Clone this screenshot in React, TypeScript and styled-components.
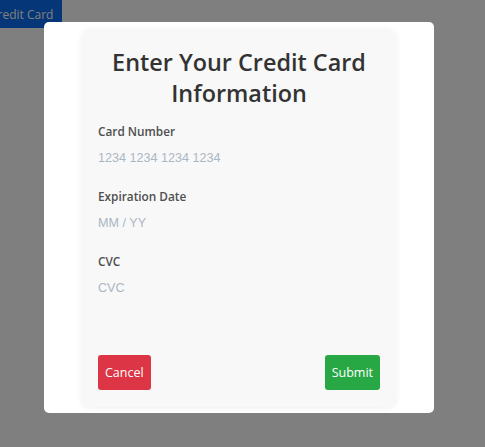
import React from "react";
import styled, { createGlobalStyle } from "styled-components";

const GlobalStyle = createGlobalStyle`
  html, body {
    margin: 0;
    padding: 0;
    background: #ffffff;
    font-family: "Open Sans", "Noto Sans", sans-serif;
  }
`;

const Page = styled.div`
  width: 100vw;
  height: 100vh;
  overflow: hidden;
`;

const TriggerButton = styled.button`
  margin-left: -19px;
  height: 28px;
  padding: 0 9px;
  border: none;
  border-radius: 0 0 4px 0;
  background: #0a6df0;
  color: #ffffff;
  font-family: "Open Sans", sans-serif;
  font-size: 12px;
`;

const Overlay = styled.div`
  position: fixed;
  inset: 0;
  background: rgba(0, 0, 0, 0.5);
  display: flex;
  justify-content: center;
  align-items: flex-start;
  padding: 22px 7px 0 0;
`;

const Modal = styled.div`
  width: 390px;
  height: 391px;
  box-sizing: border-box;
  padding: 7px 38px 6px;
  background: #ffffff;
  border-radius: 5px;
  display: flex;
`;

const Card = styled.form`
  flex: 1;
  display: flex;
  flex-direction: column;
  padding: 18px 16px 17px;
  background: #f8f8f8;
  border-radius: 9px;
  box-shadow: 0 1px 6px rgba(0, 0, 0, 0.07);
`;

const Title = styled.h2`
  margin: 0 0 13px;
  text-align: center;
  font-size: 23.4px;
  line-height: 31px;
  font-weight: 600;
  color: #333333;
`;

const Field = styled.div`
  display: flex;
  flex-direction: column;
  margin-bottom: 14px;
`;

const Label = styled.label`
  font-size: 11.8px;
  line-height: 18px;
  font-weight: 600;
  color: #4f4f4f;
  margin-bottom: 3px;
`;

const Input = styled.input`
  height: 30px;
  padding: 0;
  border: none;
  outline: none;
  background: transparent;
  font-family: "Liberation Sans", Arial, sans-serif;
  font-size: 12.6px;
  color: #32325d;

  &::placeholder {
    color: #aab7c4;
  }
`;

const Actions = styled.div`
  margin-top: auto;
  display: flex;
  justify-content: space-between;
`;

const ActionButton = styled.button<{ $tone: "danger" | "success" }>`
  height: 35px;
  padding: 0 7px;
  border: none;
  border-radius: 3px;
  background: ${(p) => (p.$tone === "danger" ? "#dc3545" : "#28a745")};
  color: #ffffff;
  font-family: "Open Sans", sans-serif;
  font-size: 12.5px;
`;

const fields = [
  { id: "number", label: "Card Number", placeholder: "1234 1234 1234 1234" },
  { id: "expiry", label: "Expiration Date", placeholder: "MM / YY" },
  { id: "cvc", label: "CVC", placeholder: "CVC" },
];

const App = () => {
  return (
    <Page>
      <GlobalStyle />
      <TriggerButton>Credit Card</TriggerButton>
      <Overlay>
        <Modal>
          <Card onSubmit={(e) => e.preventDefault()}>
            <Title>Enter Your Credit Card Information</Title>
            {fields.map((f) => (
              <Field key={f.id}>
                <Label htmlFor={f.id}>{f.label}</Label>
                <Input id={f.id} placeholder={f.placeholder} />
              </Field>
            ))}
            <Actions>
              <ActionButton type="button" $tone="danger">
                Cancel
              </ActionButton>
              <ActionButton type="submit" $tone="success">
                Submit
              </ActionButton>
            </Actions>
          </Card>
        </Modal>
      </Overlay>
    </Page>
  );
};

export default App;
